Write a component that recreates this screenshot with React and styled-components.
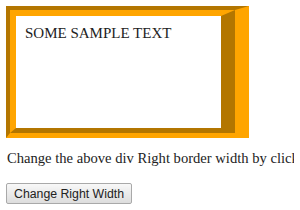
import React from "react";
import styled, {createGlobalStyle} from "styled-components";

const GlobalStyle = createGlobalStyle`
  body {
    margin: 6px;
    background: #fff;
    font-family: "Liberation Serif", "Times New Roman", serif;
    color: #222;
  }
`;

// groove border drawn as two rings: dark/light outside, light/dark inside
const GrooveOuter = styled.div`
  width: fit-content;
  border-style: solid;
  border-width: 4px ${props => props.rightWidth / 2}px 5px 4px;
  border-color: #b37600 #ffa500 #ffa500 #b37600;
`;

const SampleBox = styled.div`
  width: 205px;
  height: 112px;
  border-style: solid;
  border-width: 6px ${props => props.rightWidth / 2}px 5px 6px;
  border-color: #ffa500 #b37600 #b37600 #ffa500;
  font-size: 15px;
`;

const SampleText = styled.div`
  padding: 9px 0 0 9px;
  line-height: 17px;
`;

const Hint = styled.p`
  margin: 12px 0 16px 1px;
  font-size: 14.6px;
  line-height: 17px;
  white-space: nowrap;
  overflow: hidden;
`;

const ActionButton = styled.button`
  font-family: "Liberation Sans", Arial, sans-serif;
  font-size: 12.3px;
  color: #222;
  height: 21px;
  padding: 0 7px;
  border: 1px solid #a9a9a9;
  border-radius: 2px;
  background: linear-gradient(#f8f8f8, #dddddd);
`;

export default function App() {
  return (
    <>
      <GlobalStyle/>
      <GrooveOuter rightWidth={28}>
        <SampleBox rightWidth={28}>
          <SampleText>SOME SAMPLE TEXT</SampleText>
        </SampleBox>
      </GrooveOuter>
      <Hint>Change the above div Right border width by clicking the button</Hint>
      <ActionButton>Change Right Width</ActionButton>
    </>
  );
}
